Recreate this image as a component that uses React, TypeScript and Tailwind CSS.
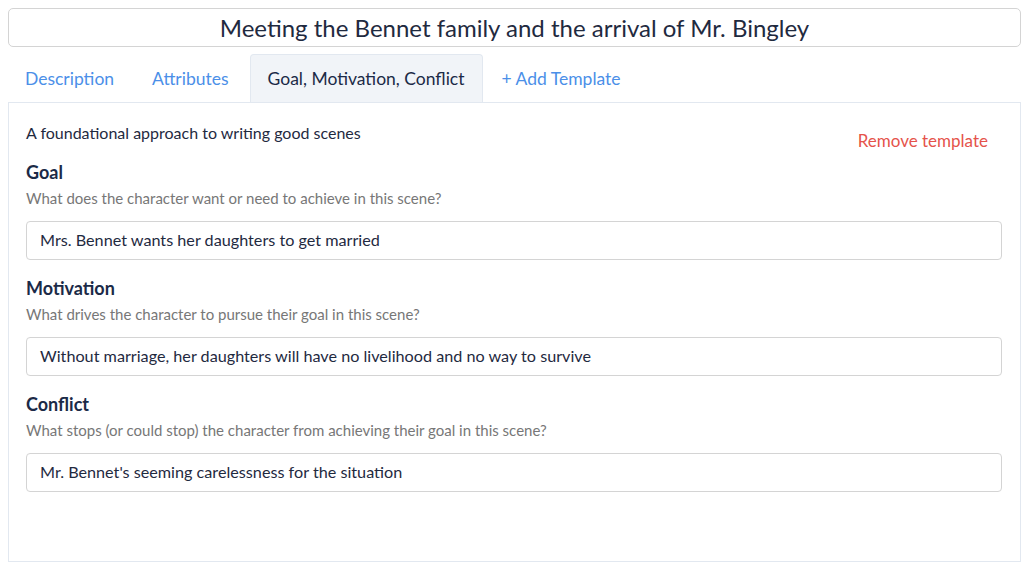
import React from "react";

const serif = { fontFamily: "Lato, 'Noto Sans', sans-serif" };

function Field({ title, desc, value }: { title: string; desc: string; value: string }) {
  return (
    <div className="flex flex-col">
      <div className="text-[18px] font-bold text-[#1b2a47] leading-[24px]">{title}</div>
      <div className="text-[15px] text-[#777] leading-[20px] mt-[4px]">{desc}</div>
      <div className="mt-[13px] h-[39px] border border-[#d4d4d4] rounded-[4px] flex items-center px-[13px] text-[16.2px] text-[#1f2a3f]" style={serif}>
        {value}
      </div>
    </div>
  );
}

export default function App() {
  return (
    <div className="w-[1024px] h-[579px] bg-white pl-[8px] pr-[3px] pt-[8px] font-['Lato',sans-serif]">
      <div className="h-[39px] border border-[#d4d4d4] rounded-[5px] flex items-center justify-center text-[24px] text-[#1f2a3f]" style={serif}>
        Meeting the Bennet family and the arrival of Mr. Bingley
      </div>
      <div className="mt-[7px] flex items-end h-[48px] text-[17.5px]">
        <div className="px-[17px] h-[47px] pt-[1px] flex items-center text-[#4b8fe8]">Description</div>
        <div className="px-[21px] h-[47px] pt-[1px] flex items-center text-[#4b8fe8]">Attributes</div>
        <div className="px-[17px] h-[48px] pt-[1px] flex items-center text-[#1b2a47] bg-[#f1f4f8] border border-[#e2e8f0] border-b-0 rounded-t-[4px]">
          Goal, Motivation, Conflict
        </div>
        <div className="px-[19px] h-[47px] pt-[1px] flex items-center text-[#4b8fe8]">+ Add Template</div>
      </div>
      <div className="h-[460px] border border-[#e2e8f0] pl-[17px] pr-[18px] pt-[20px] flex flex-col">
        <div className="flex justify-between">
          <div className="text-[16px] text-[#1f2a3f] leading-[20px]" style={serif}>A foundational approach to writing good scenes</div>
          <div className="text-[17px] text-[#e5534b] mt-[5px] mr-[14px]">Remove template</div>
        </div>
        <div className="flex flex-col gap-[16px] mt-[6px]">
          <Field title="Goal" desc="What does the character want or need to achieve in this scene?" value="Mrs. Bennet wants her daughters to get married" />
          <Field title="Motivation" desc="What drives the character to pursue their goal in this scene?" value="Without marriage, her daughters will have no livelihood and no way to survive" />
          <Field title="Conflict" desc="What stops (or could stop) the character from achieving their goal in this scene?" value="Mr. Bennet's seeming carelessness for the situation" />
        </div>
      </div>
    </div>
  );
}
